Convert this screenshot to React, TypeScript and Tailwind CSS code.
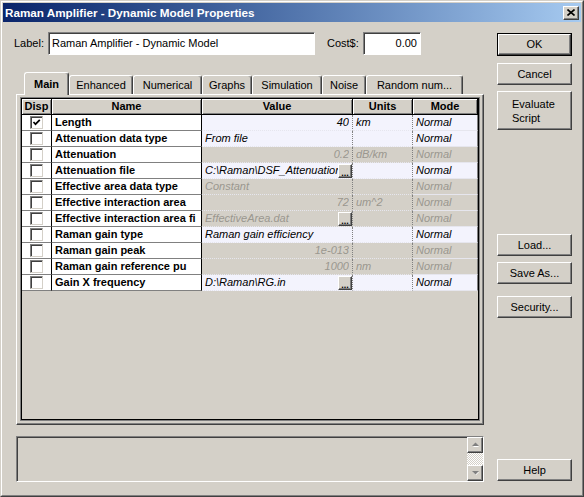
import React from "react";

type Row = {
  name: string;
  value: string;
  units?: string;
  on: boolean;
  right?: boolean;
  btn?: boolean;
  checked?: boolean;
};

const rows: Row[] = [
  { name: "Length", value: "40", units: "km", on: true, right: true, checked: true },
  { name: "Attenuation data type", value: "From file", on: true },
  { name: "Attenuation", value: "0.2", units: "dB/km", on: false, right: true },
  { name: "Attenuation file", value: "C:\\Raman\\DSF_Attenuation", on: true, btn: true },
  { name: "Effective area data type", value: "Constant", on: false },
  { name: "Effective interaction area", value: "72", units: "um^2", on: false, right: true },
  { name: "Effective interaction area fi", value: "EffectiveArea.dat", on: false, btn: true },
  { name: "Raman gain type", value: "Raman gain efficiency", on: true },
  { name: "Raman gain peak", value: "1e-013", on: false, right: true },
  { name: "Raman gain reference pu", value: "1000", units: "nm", on: false, right: true },
  { name: "Gain X frequency", value: "D:\\Raman\\RG.in", on: true, btn: true },
];

const raised =
  "border border-t-white border-l-white border-r-[#404040] border-b-[#404040] shadow-[inset_-1px_-1px_0_#808080]";
const sunken =
  "border border-t-[#808080] border-l-[#808080] border-r-white border-b-white shadow-[inset_1px_1px_0_#404040]";

const Button: React.FC<{ className?: string; children: React.ReactNode }> = ({ className = "", children }) => (
  <div className={`${raised} bg-[#d4d0c8] flex items-center justify-center text-[11px] text-black ${className}`}>
    {children}
  </div>
);

const Check: React.FC<{ checked?: boolean }> = ({ checked }) => (
  <div className="w-[13px] h-[13px] bg-white border border-t-[#808080] border-l-[#808080] border-r-[#d4d0c8] border-b-[#d4d0c8] shadow-[inset_1px_1px_0_#404040] flex items-center justify-center">
    {checked && (
      <svg width="9" height="9" viewBox="0 0 9 9">
        <path d="M1.5 4 L3.5 6.2 L7.8 1.8" fill="none" stroke="#000" strokeWidth="1.7" />
      </svg>
    )}
  </div>
);

const Dots = () => (
  <div className={`${raised} w-[14px] h-[14px] bg-[#d4d0c8] shrink-0 flex items-end justify-center pb-[1px]`}>
    <span className="text-[9px] leading-[6px] font-bold not-italic text-black">...</span>
  </div>
);

const Arrow: React.FC<{ up?: boolean }> = ({ up }) => (
  <div className={`${raised} h-[16px] bg-[#d4d0c8] flex items-center justify-center`}>
    <svg width="9" height="6" viewBox="0 0 9 6">
      {up ? (
        <>
          <path d="M2 5 L5 2 L8 5 Z" fill="#fff" />
          <path d="M1 4 L4.5 0.5 L8 4 Z" fill="#808080" />
        </>
      ) : (
        <>
          <path d="M2 2 L5 5 L8 2 Z" fill="#fff" />
          <path d="M1 1 L4.5 4.5 L8 1 Z" fill="#808080" />
        </>
      )}
    </svg>
  </div>
);

export default function App() {
  return (
    <div className="w-[584px] h-[497px] bg-[#d4d0c8] border border-t-[#d4d0c8] border-l-[#d4d0c8] border-r-[#404040] border-b-[#404040] font-['Liberation_Sans',Arial,sans-serif] text-black overflow-hidden">
      <div className="h-full border border-t-white border-l-white border-r-[#808080] border-b-[#808080] p-px flex flex-col">
        {/* title bar */}
        <div className="h-[19px] shrink-0 bg-linear-to-r from-[#0a246a] to-[#a6caf0] flex items-center pl-[2px] pr-[2px]">
          <span className="text-white font-bold text-[11.7px] leading-none flex-1">
            Raman Amplifier - Dynamic Model Properties
          </span>
          <div className={`${raised} w-[16px] h-[14px] bg-[#d4d0c8] flex items-center justify-center`}>
            <svg width="8" height="7" viewBox="0 0 8 7">
              <path d="M0.5 0.5 L7.5 6.5 M7.5 0.5 L0.5 6.5" stroke="#000" strokeWidth="1.6" />
            </svg>
          </div>
        </div>

        <div className="flex flex-1">
          {/* left column */}
          <div className="ml-[13px] w-[468px] flex flex-col">
            <div className="mt-[10px] h-[23px] flex items-center text-[11px]">
              <span className="-ml-[2px] w-[34px]">Label:</span>
              <div className={`${sunken} bg-white w-[267px] h-[23px] flex items-center pl-[3px]`}>
                Raman Amplifier - Dynamic Model
              </div>
              <span className="ml-[12px] w-[36px]">Cost$:</span>
              <div className={`${sunken} bg-white w-[58px] h-[23px] flex items-center justify-end pr-[3px]`}>
                0.00
              </div>
            </div>

            {/* tabs */}
            <div className="mt-[17px] h-[22px] flex items-end pl-[8px] text-[11px]">
              <div className="relative z-10 -mb-px w-[45px] h-[23px] bg-[#d4d0c8] border-t border-l border-white border-r border-r-[#404040] rounded-t-[3px] shadow-[inset_-1px_0_0_#808080] flex items-center justify-center font-bold">
                Main
              </div>
              <div className="w-[64px] h-[19px] border-t border-l border-white border-r border-r-[#404040] rounded-t-[3px] shadow-[inset_-1px_0_0_#808080] flex items-center justify-center">
                Enhanced
              </div>
              <div className="w-[69px] h-[19px] border-t border-l border-white border-r border-r-[#404040] rounded-t-[3px] shadow-[inset_-1px_0_0_#808080] flex items-center justify-center">
                Numerical
              </div>
              <div className="w-[50px] h-[19px] border-t border-l border-white border-r border-r-[#404040] rounded-t-[3px] shadow-[inset_-1px_0_0_#808080] flex items-center justify-center">
                Graphs
              </div>
              <div className="w-[70px] h-[19px] border-t border-l border-white border-r border-r-[#404040] rounded-t-[3px] shadow-[inset_-1px_0_0_#808080] flex items-center justify-center">
                Simulation
              </div>
              <div className="w-[44px] h-[19px] border-t border-l border-white border-r border-r-[#404040] rounded-t-[3px] shadow-[inset_-1px_0_0_#808080] flex items-center justify-center">
                Noise
              </div>
              <div className="w-[97px] h-[19px] border-t border-l border-white border-r border-r-[#404040] rounded-t-[3px] shadow-[inset_-1px_0_0_#808080] flex items-center justify-center">
                Random num...
              </div>
            </div>

            {/* tab panel */}
            <div className={`${raised} h-[331px] pt-[2px] px-[3px] pb-[3px]`}>
              <div className="h-full border border-[#808080]">
                <div className="h-full border border-black flex flex-col bg-[#d4d0c8]">
                  {/* header */}
                  <div className="h-[16px] flex text-[11px] font-bold">
                    <div className="w-[30px] border-r border-b border-black shadow-[inset_1px_1px_0_#fff,inset_-1px_-1px_0_#808080] flex items-center justify-center">
                      Disp
                    </div>
                    <div className="w-[150px] border-r border-b border-black shadow-[inset_1px_1px_0_#fff,inset_-1px_-1px_0_#808080] flex items-center justify-center">
                      Name
                    </div>
                    <div className="w-[151px] border-r border-b border-black shadow-[inset_1px_1px_0_#fff,inset_-1px_-1px_0_#808080] flex items-center justify-center">
                      Value
                    </div>
                    <div className="w-[60px] border-r border-b border-black shadow-[inset_1px_1px_0_#fff,inset_-1px_-1px_0_#808080] flex items-center justify-center">
                      Units
                    </div>
                    <div className="flex-1 border-r border-b border-black shadow-[inset_1px_1px_0_#fff,inset_-1px_-1px_0_#808080] flex items-center justify-center">
                      Mode
                    </div>
                  </div>

                  {rows.map((r) => {
                    const bg = r.on ? "bg-[#f3f3fd]" : "bg-[#d4d0c8]";
                    const fg = r.on ? "text-black" : "text-[#9a978f]";
                    return (
                      <div key={r.name} className="h-[16px] flex text-[11px]">
                        <div className="w-[30px] bg-white border-r border-r-black border-b border-b-[#808080] flex items-center justify-center">
                          <Check checked={r.checked} />
                        </div>
                        <div className="w-[150px] bg-white border-r border-r-black border-b border-b-[#808080] pl-[3px] font-bold whitespace-nowrap overflow-hidden flex items-center">
                          {r.name}
                        </div>
                        <div
                          className={`w-[151px] ${bg} ${fg} italic border-r border-dotted border-r-[#808080] border-b border-b-[#e6e6ee] flex items-center ${
                            r.right ? "justify-end pr-[3px]" : "pl-[3px]"
                          }`}
                        >
                          <span className="whitespace-nowrap overflow-hidden flex-1 min-w-0 text-inherit">
                            {r.right ? <span className="block text-right">{r.value}</span> : r.value}
                          </span>
                          {r.btn && <Dots />}
                        </div>
                        <div className={`w-[60px] ${bg} ${fg} italic border-r border-dotted border-r-[#808080] border-b border-b-[#e6e6ee] pl-[3px] flex items-center`}>
                          {r.units}
                        </div>
                        <div className={`flex-1 ${bg} ${fg} italic border-r border-r-[#808080] border-b border-b-[#e6e6ee] pl-[3px] flex items-center`}>
                          Normal
                        </div>
                      </div>
                    );
                  })}
                </div>
              </div>
            </div>

            {/* log box */}
            <div className={`${sunken} mt-[11px] h-[46px] flex justify-end`}>
              <div className="w-[16px] flex flex-col">
                <Arrow up />
                <div className="flex-1 bg-[repeating-conic-gradient(#ffffff_0_25%,#d4d0c8_0_50%)] bg-[length:2px_2px]" />
                <Arrow />
              </div>
            </div>
          </div>

          {/* right column */}
          <div className="ml-[13px] w-[75px] flex flex-col">
            <div className="mt-[11px] h-[23px] border border-black">
              <Button className="h-full">OK</Button>
            </div>
            <Button className="mt-[7px] h-[22px]">Cancel</Button>
            <Button className="mt-[6px] h-[39px] !justify-start pl-[14px] leading-[14px]">
              <span>
                Evaluate
                <br />
                Script
              </span>
            </Button>
            <Button className="mt-[104px] h-[22px]">Load...</Button>
            <Button className="mt-[6px] h-[22px]">Save As...</Button>
            <Button className="mt-[12px] h-[22px]">Security...</Button>
            <Button className="mt-[141px] h-[22px]">Help</Button>
          </div>
        </div>
      </div>
    </div>
  );
}
